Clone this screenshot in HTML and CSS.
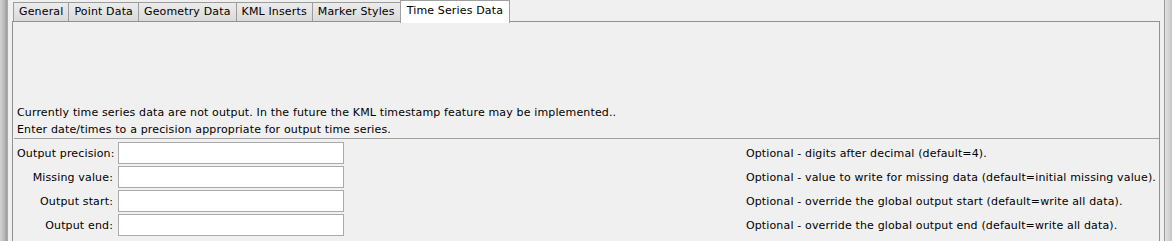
FILE: index.html
```html
<!DOCTYPE html>
<html lang="en">
<head>
  <meta charset="UTF-8">
  <title>Time Series Data</title>
  <link rel="stylesheet" href="styles.css">
</head>
<body>
  <div class="frame">
    <div class="gutter-left"></div>

    <div class="tabbed">
      <!-- tab strip -->
      <div class="tabs">
        <div class="tab">General</div>
        <div class="tab">Point Data</div>
        <div class="tab">Geometry Data</div>
        <div class="tab">KML Inserts</div>
        <div class="tab">Marker Styles</div>
        <div class="tab selected">Time Series Data</div>
      </div>

      <!-- tab content -->
      <div class="panel">
        <p class="note">Currently time series data are not output. In the future the KML timestamp feature may be implemented..</p>
        <p class="note">Enter date/times to a precision appropriate for output time series.</p>
        <div class="separator"></div>

        <div class="form">
          <label class="label">Output precision:</label>
          <input class="field" type="text">
          <span></span>
          <span class="desc">Optional - digits after decimal (default=4).</span>

          <label class="label">Missing value:</label>
          <input class="field" type="text">
          <span></span>
          <span class="desc">Optional - value to write for missing data (default=initial missing value).</span>

          <label class="label">Output start:</label>
          <input class="field" type="text">
          <span></span>
          <span class="desc">Optional - override the global output start (default=write all data).</span>

          <label class="label">Output end:</label>
          <input class="field" type="text">
          <span></span>
          <span class="desc">Optional - override the global output end (default=write all data).</span>
        </div>
      </div>
    </div>

    <div class="gutter-right"></div>
  </div>
</body>
</html>
```

FILE: styles.css
```css
/* Dasar */
body {
  margin: 0;
  background-color: #f0f0f0;
  font-family: "DejaVu Sans", sans-serif;
  font-size: 11px;
  letter-spacing: 0.15px;
  color: #000;
  overflow: hidden;
}

.frame {
  display: flex;
  height: 241px;
}

/* Tepi kiri dan kanan */
.gutter-left {
  width: 7px;
  margin-right: 4px;
  border-right: 1px solid #a8a8a8;
  background: linear-gradient(to right, #d4d4d4, #b8b8b8 60%, #9c9c9c);
}

.gutter-right {
  width: 7px;
  margin-left: 4px;
  border-left: 1px solid #9a9a9a;
  background: linear-gradient(to right, #e2e2e2, #c6c6c6);
}

.tabbed {
  flex: 1;
  display: flex;
  flex-direction: column;
  min-width: 0;
}

/* Tab */
.tabs {
  display: flex;
  align-items: flex-end;
  height: 21px;
  padding-left: 1px;
  position: relative;
  z-index: 1;
}

.tab {
  height: 18px;
  line-height: 18px;
  padding: 0 5px;
  border: 1px solid #9c9c9c;
  border-bottom: none;
  margin-right: -1px;
  background: linear-gradient(to bottom, #ececec, #dadada);
}

.tab.selected {
  height: 22px;
  line-height: 20px;
  margin-bottom: -2px;
  padding: 0 6px;
  background: #fff;
  border-color: #a0a0a0;
}

/* Isi tab */
.panel {
  flex: 1;
  border: 1px solid #8f9196;
  border-bottom: none;
  padding: 82px 3px 0 4px;
}

.note {
  margin: 0;
  line-height: 17px;
  white-space: nowrap;
}

.separator {
  height: 1px;
  margin: 0 -3px 3px -3px;
  background-color: #a0a0a0;
}

/* Form */
.form {
  display: grid;
  grid-template-columns: 96px 226px 1fr auto;
  column-gap: 5px;
  row-gap: 2px;
  align-items: center;
}

.label {
  text-align: right;
  white-space: nowrap;
}

.field {
  height: 22px;
  box-sizing: border-box;
  margin: 0;
  padding: 0 3px;
  border: 1px solid #ababab;
  background: #fff;
  font: inherit;
}

.desc {
  white-space: nowrap;
}
```
